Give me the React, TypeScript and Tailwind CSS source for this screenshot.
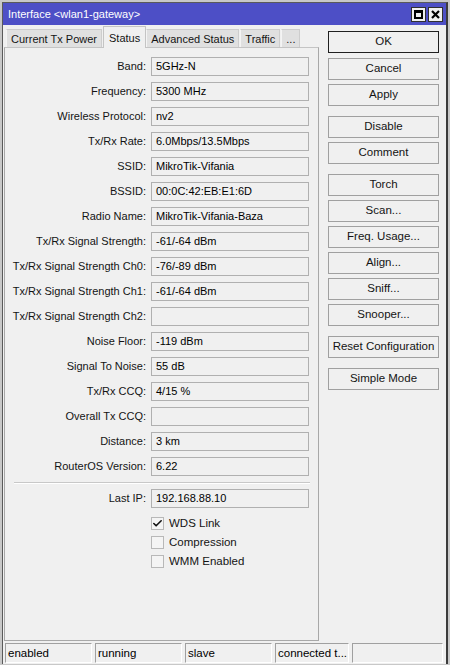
import { Check } from 'lucide-react'

const fields: [string, string][] = [
  ['Band:', '5GHz-N'],
  ['Frequency:', '5300 MHz'],
  ['Wireless Protocol:', 'nv2'],
  ['Tx/Rx Rate:', '6.0Mbps/13.5Mbps'],
  ['SSID:', 'MikroTik-Vifania'],
  ['BSSID:', '00:0C:42:EB:E1:6D'],
  ['Radio Name:', 'MikroTik-Vifania-Baza'],
  ['Tx/Rx Signal Strength:', '-61/-64 dBm'],
  ['Tx/Rx Signal Strength Ch0:', '-76/-89 dBm'],
  ['Tx/Rx Signal Strength Ch1:', '-61/-64 dBm'],
  ['Tx/Rx Signal Strength Ch2:', ''],
  ['Noise Floor:', '-119 dBm'],
  ['Signal To Noise:', '55 dB'],
  ['Tx/Rx CCQ:', '4/15 %'],
  ['Overall Tx CCQ:', ''],
  ['Distance:', '3 km'],
  ['RouterOS Version:', '6.22'],
]

const tabs = ['Current Tx Power', 'Status', 'Advanced Status', 'Traffic', '...']

const buttonGroups = [
  ['OK', 'Cancel', 'Apply'],
  ['Disable', 'Comment'],
  ['Torch', 'Scan...', 'Freq. Usage...', 'Align...', 'Sniff...', 'Snooper...'],
  ['Reset Configuration'],
  ['Simple Mode'],
]

const checks: [string, boolean][] = [
  ['WDS Link', true],
  ['Compression', false],
  ['WMM Enabled', false],
]

const statusCells = ['enabled', 'running', 'slave', 'connected t...', '']

function FieldRow({ label, value }: { label: string; value: string }) {
  return (
    <div className="flex items-center h-[19px] mb-[6px]">
      <div className="w-[140px] text-right text-[#141414] whitespace-nowrap">{label}</div>
      <div className="ml-[5px] w-[158px] h-[19px] border border-[#b0b0b0] bg-[#f0f0f0] px-[4px] leading-[17px] text-black whitespace-nowrap overflow-hidden">
        {value}
      </div>
    </div>
  )
}

function App() {
  return (
    <div
      className="w-[450px] h-[665px] bg-[#c8c8c8] pl-[2px] pt-[2px] pr-[2px] pb-[1px] text-[11px] overflow-hidden"
      style={{ fontFamily: '"Liberation Sans", Arial, sans-serif' }}
    >
      <div className="h-full flex flex-col bg-[#f0f0f0] border-l border-t border-r-2 border-[#5a5a5a] border-r-[#3c3c3c]">
        {/* title bar */}
        <div className="h-[22px] bg-[#4d4fc6] flex items-center justify-between pl-[5px] pr-[3px] text-white text-[11px] shrink-0">
          <span>Interface &lt;wlan1-gateway&gt;</span>
          <div className="flex gap-[2px]">
            <div className="w-[15px] h-[15px] bg-[#f0f0f0] border border-[#303030] flex items-center justify-center">
              <div className="w-[9px] h-[9px] border-2 border-black border-t-[3px]" />
            </div>
            <div className="w-[15px] h-[15px] bg-[#f0f0f0] border border-[#303030] flex items-center justify-center">
              <svg width="9" height="9" viewBox="0 0 9 9">
                <path d="M1 1 L8 8 M8 1 L1 8" stroke="black" strokeWidth="2.2" />
              </svg>
            </div>
          </div>
        </div>

        <div className="flex-1 flex min-h-0">
          {/* left side */}
          <div className="flex flex-col w-[316px] shrink-0 pl-[1px]">
            <div className="h-[22px] flex items-end pl-[2px] shrink-0">
              {tabs.map((t) =>
                t === 'Status' ? (
                  <div
                    key={t}
                    className="shrink-0 whitespace-nowrap h-[22px] px-[5px] bg-[#f0f0f0] border border-b-0 border-[#c4c4c4] text-[#141414] pt-[3px] -mb-px relative z-10"
                  >
                    {t}
                  </div>
                ) : (
                  <div
                    key={t}
                    className="shrink-0 whitespace-nowrap h-[18px] px-[4px] bg-[#e0e0e0] border border-b-0 border-[#cdcdcd] border-l-[#f4f4f4] text-[#141414] leading-[18px] mr-[1px]"
                  >
                    {t}
                  </div>
                )
              )}
            </div>
            <div className="flex-1 border border-[#a8a8a8] border-t-[#c4c4c4] bg-[#f0f0f0] pt-[9px] pl-[1px] mb-[1px]">
              {fields.map(([l, v]) => (
                <FieldRow key={l} label={l} value={v} />
              ))}
              <div className="mx-[8px] mt-[4px] mb-[5px] h-[2px] border-t border-[#c8c8c8] border-b border-b-white" />
              <FieldRow label="Last IP:" value="192.168.88.10" />
              <div className="flex flex-col ml-[145px] mt-0">
                {checks.map(([l, c]) => (
                  <div key={l} className="flex items-center h-[19px]">
                    <div className="w-[13px] h-[13px] border border-[#b8b8b8] bg-[#f4f4f4] flex items-center justify-center">
                      {c && <Check size={11} strokeWidth={3.5} color="#101010" />}
                    </div>
                    <span className="ml-[5px] text-[#141414] text-[11.5px]">{l}</span>
                  </div>
                ))}
              </div>
            </div>
          </div>

          {/* right side buttons */}
          <div className="ml-[9px] w-[111px] pt-[6px] flex flex-col gap-[10px]">
            {buttonGroups.map((g, gi) => (
              <div key={gi} className="flex flex-col gap-[4px]">
                {g.map((b) => (
                  <div
                    key={b}
                    className={`h-[22px] flex items-center justify-center bg-[#f0f0f0] border text-[#141414] text-[11.5px] whitespace-nowrap ${
                      b === 'OK' ? 'border-[#202020] mb-[1px]' : 'border-[#a0a0a0]'
                    }`}
                  >
                    {b}
                  </div>
                ))}
              </div>
            ))}
          </div>
        </div>

        {/* status bar */}
        <div className="h-[22px] flex gap-[3px] pl-[2px] pr-[3px] pt-[1px] shrink-0">
          {statusCells.map((s, i) => (
            <div
              key={i}
              className={`h-[20px] border border-[#a0a0a0] border-r-white border-b-white px-[2px] leading-[18px] text-[11.5px] text-black whitespace-nowrap overflow-hidden shrink-0 ${
                i === 4 ? 'flex-1' : i === 3 ? 'w-[74px]' : 'w-[87px]'
              }`}
            >
              {s}
            </div>
          ))}
        </div>
      </div>
    </div>
  )
}

export default App
